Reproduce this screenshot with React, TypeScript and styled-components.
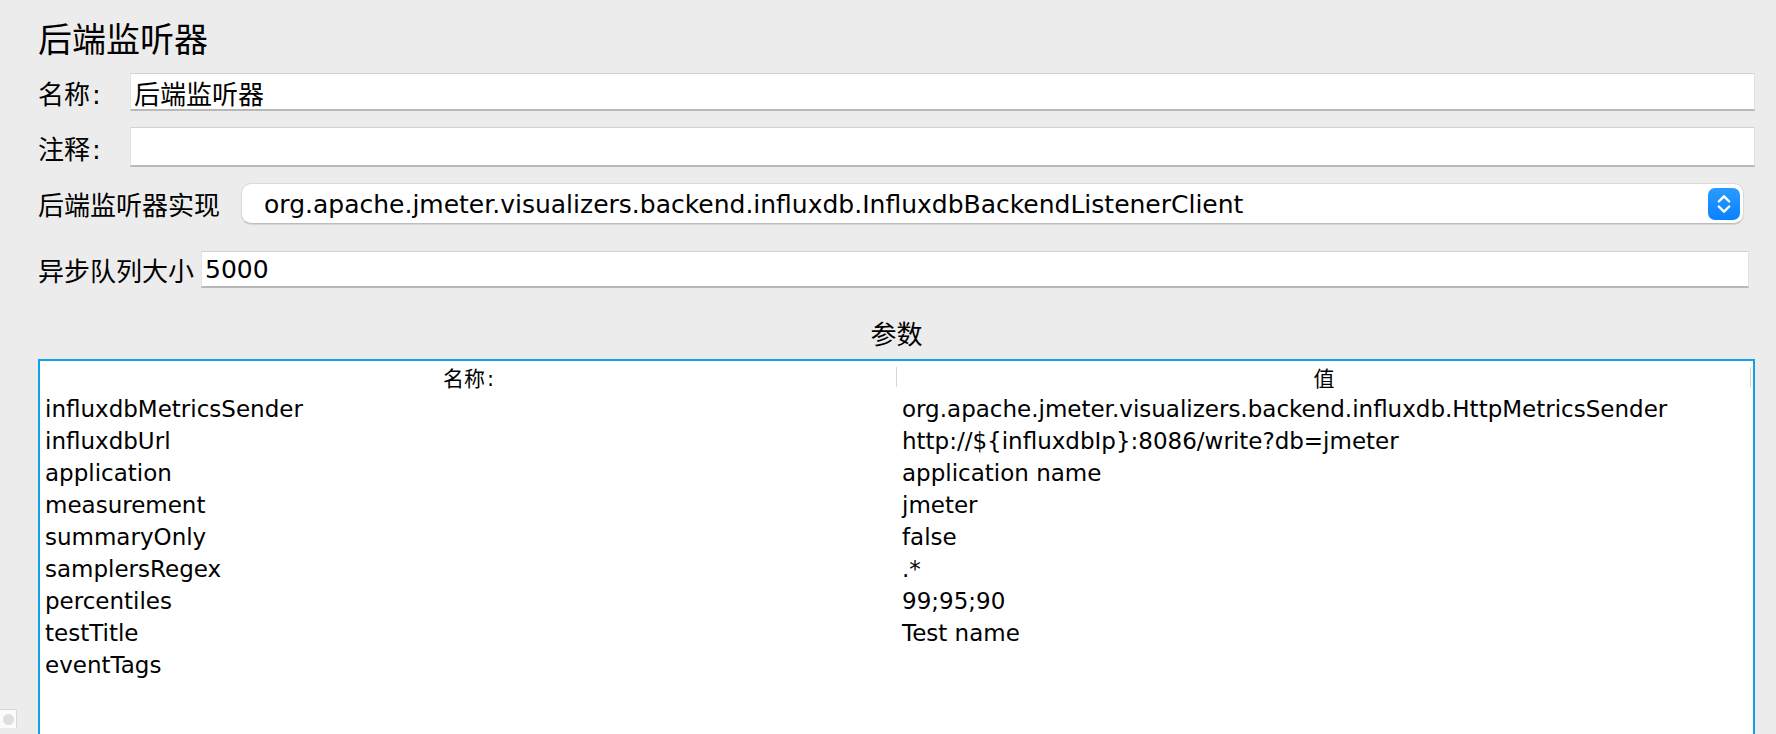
import React from "react";
import styled, { createGlobalStyle } from "styled-components";

const GlobalStyle = createGlobalStyle`
  html, body { margin: 0; padding: 0; background: #ececec; }
  body {
    font-family: "DejaVu Sans", "Noto Sans CJK SC", sans-serif;
    color: #000;
  }
  * { box-sizing: border-box; }
`;

const Window = styled.div`
  width: 1776px;
  height: 734px;
  overflow: hidden;
  display: flex;
  background: #ececec;
`;

const Gutter = styled.div`
  width: 38px;
  flex: none;
  display: flex;
  flex-direction: column;
  justify-content: flex-end;
  padding-bottom: 6px;
`;

const Knob = styled.div`
  width: 17px;
  height: 19px;
  background: #fbfbfb;
  border-top: 1px solid #d8d8d8;
  border-right: 1px solid #d8d8d8;
  display: flex;
  align-items: center;
  justify-content: center;
  &::before {
    content: "";
    width: 11px;
    height: 11px;
    border-radius: 50%;
    background: #dedede;
  }
`;

const Main = styled.div`
  flex: 1;
  min-width: 0;
  padding: 18px 21px 0 0;
  display: flex;
  flex-direction: column;
`;

const Title = styled.h1`
  margin: 0;
  font-size: 34px;
  font-weight: normal;
  line-height: 40px;
  height: 40px;
  font-family: "Noto Sans CJK SC", sans-serif;
`;

const FieldRow = styled.div<{ $mt: number; $mr?: number }>`
  display: flex;
  align-items: center;
  margin-top: ${(p) => p.$mt}px;
  margin-right: ${(p) => p.$mr ?? 0}px;
`;

const Label = styled.label<{ $w?: number; $gap?: number }>`
  flex: none;
  font-size: 26px;
  font-family: "Noto Sans CJK SC", sans-serif;
  white-space: nowrap;
  ${(p) => (p.$w ? `width: ${p.$w}px;` : "")}
  margin-right: ${(p) => p.$gap ?? 0}px;
`;

const Colon = styled.span`
  font-family: "DejaVu Sans", sans-serif;
  margin-left: 2px;
`;

const TextField = styled.input<{ $h: number; $fs?: number }>`
  flex: 1;
  min-width: 0;
  height: ${(p) => p.$h}px;
  margin: 0;
  padding: 1px 3px 0;
  background: #fff;
  border: 1px solid #e2e2e2;
  border-top-color: #d2d2d2;
  border-bottom: 2px solid #b8b8b8;
  border-radius: 0;
  outline: none;
  font-family: "DejaVu Sans", "Noto Sans CJK SC", sans-serif;
  font-size: ${(p) => p.$fs ?? 25}px;
  color: #000;
`;

const Combo = styled.div`
  flex: 1;
  min-width: 0;
  height: 41px;
  display: flex;
  align-items: center;
  background: #fff;
  border: 1px solid #dadada;
  border-bottom-color: #bdbdbd;
  border-radius: 10px;
  box-shadow: 0 1px 1px rgba(0, 0, 0, 0.1);
  padding: 2px 3px 0 22px;
`;

const ComboText = styled.span`
  flex: 1;
  font-size: 25px;
  white-space: nowrap;
  overflow: hidden;
`;

const ComboButton = styled.div`
  flex: none;
  width: 32px;
  height: 32px;
  margin-top: -2px;
  border-radius: 7px;
  background: linear-gradient(#2a9bff, #0a82ff);
  display: flex;
  align-items: center;
  justify-content: center;
`;

const SectionTitle = styled.div`
  margin-top: 30px;
  height: 30px;
  line-height: 30px;
  text-align: center;
  font-size: 26px;
  font-family: "Noto Sans CJK SC", sans-serif;
`;

const Table = styled.div`
  margin-top: 11px;
  flex: 1;
  background: #fff;
  border: 2px solid #12a1e8;
  border-bottom: none;
  display: grid;
  grid-template-columns: 857px 854px;
  grid-auto-rows: 32px;
  align-content: start;
`;

const HeadCell = styled.div`
  position: relative;
  text-align: center;
  font-size: 21px;
  line-height: 32px;
  font-family: "Noto Sans CJK SC", sans-serif;
  &::after {
    content: "";
    position: absolute;
    right: 0;
    top: 6px;
    bottom: 6px;
    width: 1px;
    background: #d6d6d6;
  }
`;

const Cell = styled.div`
  padding-left: 5px;
  font-size: 23px;
  line-height: 32px;
  white-space: nowrap;
  overflow: hidden;
`;

const rows: [string, string][] = [
  ["influxdbMetricsSender", "org.apache.jmeter.visualizers.backend.influxdb.HttpMetricsSender"],
  ["influxdbUrl", "http://${influxdbIp}:8086/write?db=jmeter"],
  ["application", "application name"],
  ["measurement", "jmeter"],
  ["summaryOnly", "false"],
  ["samplersRegex", ".*"],
  ["percentiles", "99;95;90"],
  ["testTitle", "Test name"],
  ["eventTags", ""],
];

const Chevrons = () => (
  <svg width="14" height="20" viewBox="0 0 14 20">
    <path
      d="M1.8 7.5 L7 2.3 L12.2 7.5 M1.8 12.5 L7 17.7 L12.2 12.5"
      stroke="#fff"
      strokeWidth="2.4"
      fill="none"
      strokeLinecap="round"
      strokeLinejoin="round"
    />
  </svg>
);

export default function App() {
  return (
    <>
      <GlobalStyle />
      <Window>
        <Gutter>
          <Knob />
        </Gutter>
        <Main>
          <Title>后端监听器</Title>
          <FieldRow $mt={15}>
            <Label $w={92}>
              名称<Colon>:</Colon>
            </Label>
            <TextField $h={38} $fs={26} readOnly defaultValue="后端监听器" />
          </FieldRow>
          <FieldRow $mt={16}>
            <Label $w={92}>
              注释<Colon>:</Colon>
            </Label>
            <TextField $h={40} readOnly defaultValue="" />
          </FieldRow>
          <FieldRow $mt={16} $mr={11}>
            <Label $gap={21}>后端监听器实现</Label>
            <Combo>
              <ComboText>org.apache.jmeter.visualizers.backend.influxdb.InfluxdbBackendListenerClient</ComboText>
              <ComboButton>
                <Chevrons />
              </ComboButton>
            </Combo>
          </FieldRow>
          <FieldRow $mt={27} $mr={6}>
            <Label $gap={7}>异步队列大小</Label>
            <TextField $h={37} readOnly defaultValue="5000" />
          </FieldRow>
          <SectionTitle>参数</SectionTitle>
          <Table>
            <HeadCell>
              名称<Colon>:</Colon>
            </HeadCell>
            <HeadCell>值</HeadCell>
            {rows.map(([k, v]) => (
              <React.Fragment key={k}>
                <Cell>{k}</Cell>
                <Cell>{v}</Cell>
              </React.Fragment>
            ))}
          </Table>
        </Main>
      </Window>
    </>
  );
}
